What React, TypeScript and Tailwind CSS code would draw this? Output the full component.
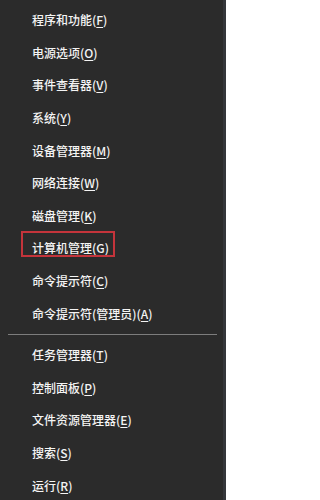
import React from 'react';

type Item = { label: string; key: string; boxed?: boolean };

const topItems: Item[] = [
  { label: '程序和功能', key: 'F' },
  { label: '电源选项', key: 'O' },
  { label: '事件查看器', key: 'V' },
  { label: '系统', key: 'Y' },
  { label: '设备管理器', key: 'M' },
  { label: '网络连接', key: 'W' },
  { label: '磁盘管理', key: 'K' },
  { label: '计算机管理', key: 'G', boxed: true },
  { label: '命令提示符', key: 'C' },
  { label: '命令提示符(管理员)', key: 'A' },
];

const bottomItems: Item[] = [
  { label: '任务管理器', key: 'T' },
  { label: '控制面板', key: 'P' },
  { label: '文件资源管理器', key: 'E' },
  { label: '搜索', key: 'S' },
  { label: '运行', key: 'R' },
];

const MenuRow = ({ item }: { item: Item }) => (
  <div className="relative flex h-[32.6px] items-center pl-[32px]">
    {item.boxed && (
      <div className="absolute left-[21px] top-[-1px] h-[26px] w-[94px] border-2 border-[#c4343b]" />
    )}
    <span className="text-[12px] font-medium leading-none text-[#f4f4f4] whitespace-nowrap">
      {item.label}(<span className="underline underline-offset-2">{item.key}</span>)
    </span>
  </div>
);

const App = () => {
  return (
    <div
      className="h-[500px] w-[226px] overflow-hidden border-r-[3px] border-[#34363a] bg-[#2b2b2b]"
      style={{ fontFamily: '"Noto Sans CJK SC", "Noto Sans", sans-serif' }}
    >
      {/* first group */}
      <div className="pt-[4px]">
        {topItems.map((item) => (
          <MenuRow key={item.key} item={item} />
        ))}
      </div>

      <div className="ml-[8px] mr-[6px] mt-[4px] mb-[4px] h-px bg-[#7d7d7d]" />

      {/* second group */}
      <div>
        {bottomItems.map((item) => (
          <MenuRow key={item.key} item={item} />
        ))}
      </div>
    </div>
  );
};

export default App;
